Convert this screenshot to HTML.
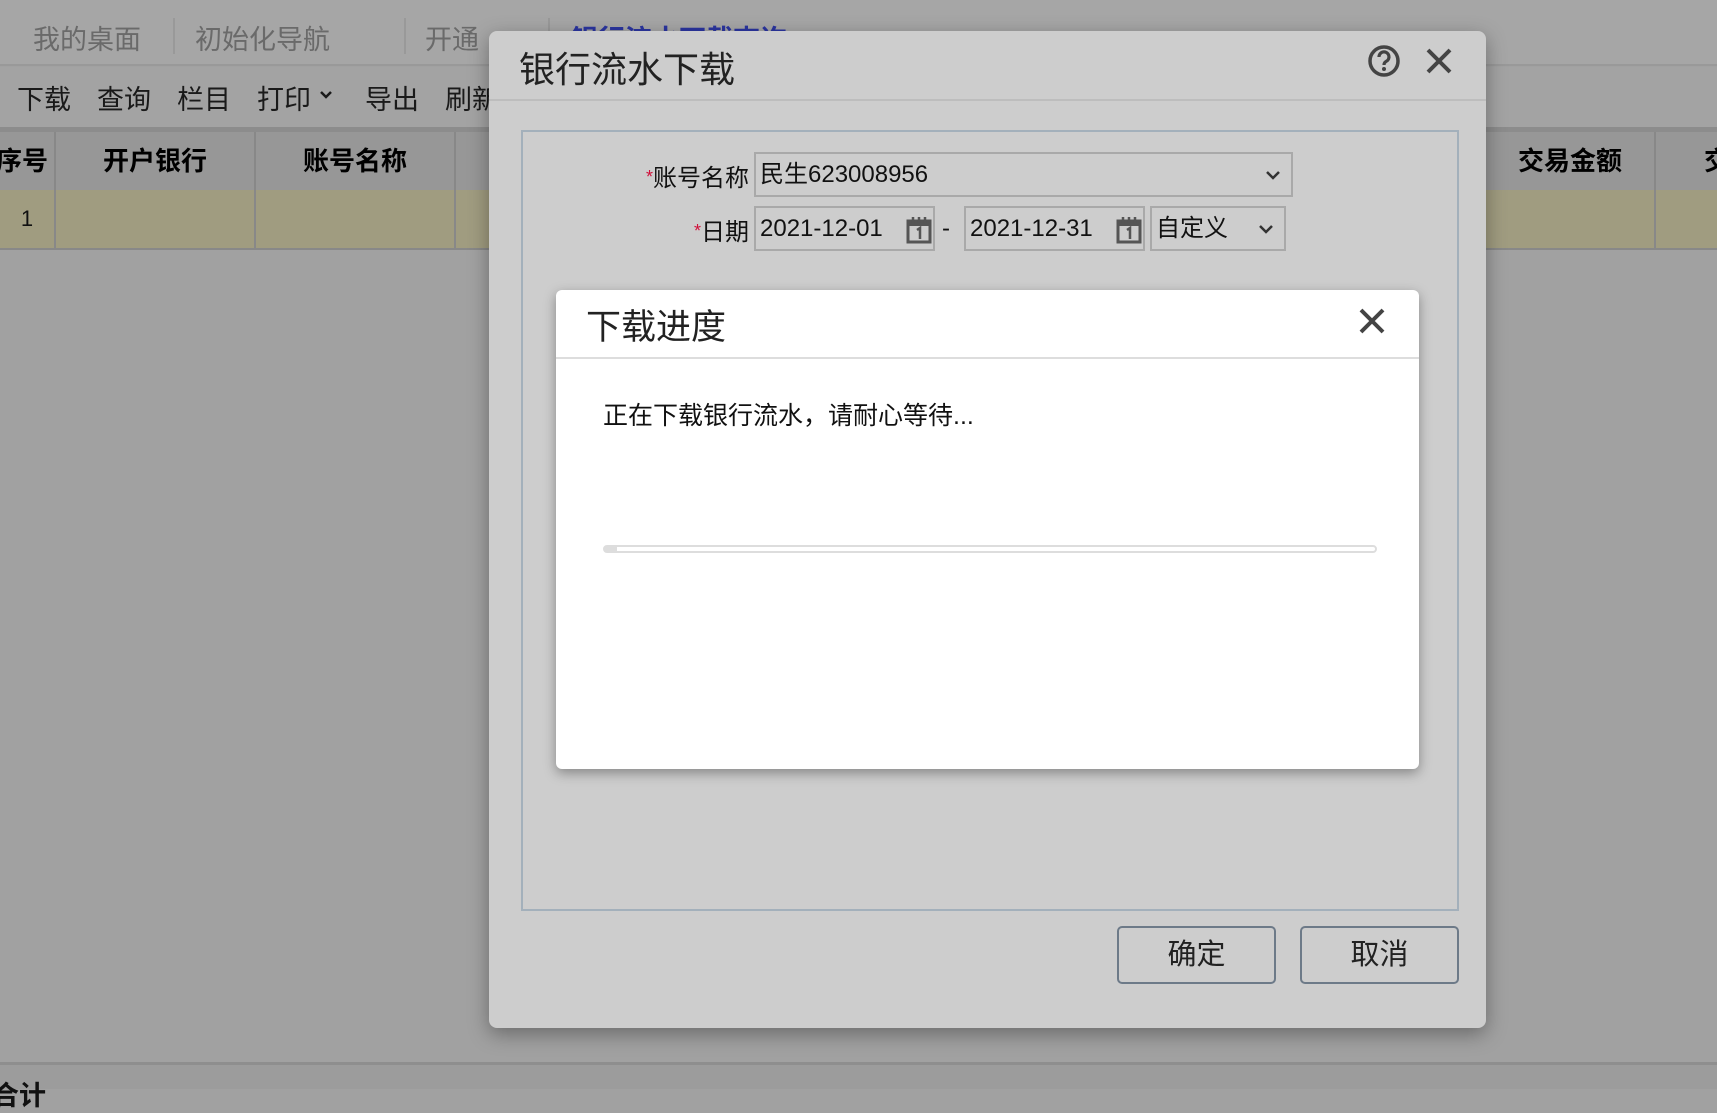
<!DOCTYPE html>
<html><head><meta charset="utf-8"><style>
*{box-sizing:border-box;margin:0;padding:0}
body{width:1717px;height:1089px;overflow:hidden;background:#a1a1a1;font-family:"Liberation Sans","Noto Sans CJK SC",sans-serif;position:relative;color:#111}
.a{position:absolute}
.tabs{left:0;top:0;width:1717px;height:66px;background:#a6a6a6;border-bottom:2px solid #999}
.tab{top:18px;font-size:27px;color:#6a6a6a}
.tb{left:0;top:67px;width:1717px;height:60px;background:#a3a3a3}
.tbi{top:78px;font-size:27px;color:#1a1a1a}
.band{left:0;top:127px;width:1717px;height:5px;background:#8c8c8c}
.hd{top:132px;height:58px;background:#979797;border-right:2px solid #888;font-size:26px;font-weight:bold;text-align:center;line-height:58px;color:#000}
.rw{top:190px;height:60px;background:#a09c80;border-right:2px solid #888;border-bottom:2px solid #888;font-size:22px;line-height:58px;text-align:center}
.dlg{left:489px;top:31px;width:997px;height:997px;background:#cdcdcd;border-radius:8px;box-shadow:0 6px 20px rgba(0,0,0,.35)}
.fs{left:32px;top:99px;width:938px;height:781px;border:2px solid #a3b0bb}
.inp{border:2px solid #a9a9a9;background:#cdcdcd;font-size:24px;line-height:41px;padding-left:4px;color:#111}
.lbl{font-size:24px;text-align:right;color:#111}
.star{color:#d0103a;font-size:18px;position:relative;top:-3px}
.btn{width:159px;height:58px;border:2px solid #6d7a88;border-radius:5px;font-size:29px;text-align:center;line-height:54px;color:#222}
.pg{left:67px;top:259px;width:863px;height:479px;background:#fff;border-radius:6px;box-shadow:0 4px 12px rgba(0,0,0,.35)}
.chev{position:absolute;top:15px}
</style></head><body>
<div class="a tabs"></div>
<div class="a tab" style="left:33px">我的桌面</div>
<div class="a" style="left:173px;top:18px;width:2px;height:36px;background:#999"></div>
<div class="a tab" style="left:195px">初始化导航</div>
<div class="a" style="left:404px;top:18px;width:2px;height:36px;background:#999"></div>
<div class="a tab" style="left:425px">开通</div>
<div class="a" style="left:548px;top:18px;width:2px;height:36px;background:#999"></div>
<div class="a tab" style="left:571px;color:#2b35a0;font-weight:bold">银行流水下载查询</div>
<div class="a tb"></div>
<div class="a tbi" style="left:17px">下载</div>
<div class="a tbi" style="left:97px">查询</div>
<div class="a tbi" style="left:177px">栏目</div>
<div class="a tbi" style="left:257px">打印</div>
<svg class="a" style="left:319px;top:90px" width="14" height="10" viewBox="0 0 14 10"><path d="M2 2l5 5 5-5" fill="none" stroke="#1a1a1a" stroke-width="2.5"/></svg>
<div class="a tbi" style="left:365px">导出</div>
<div class="a tbi" style="left:445px">刷新</div>
<div class="a band"></div>
<div class="a hd" style="left:-10px;width:66px">序号</div>
<div class="a hd" style="left:56px;width:200px">开户银行</div>
<div class="a hd" style="left:256px;width:200px">账号名称</div>
<div class="a hd" style="left:456px;width:200px"></div>
<div class="a hd" style="left:1486px;width:170px">交易金额</div>
<div class="a hd" style="left:1656px;width:100px;text-align:left;padding-left:48px">交</div>
<div class="a rw" style="left:-10px;width:66px;padding-left:10px">1</div>
<div class="a rw" style="left:56px;width:200px"></div>
<div class="a rw" style="left:256px;width:200px"></div>
<div class="a rw" style="left:456px;width:200px"></div>
<div class="a rw" style="left:1486px;width:170px"></div>
<div class="a rw" style="left:1656px;width:100px"></div>
<div class="a" style="left:0;top:1062px;width:1717px;height:3px;background:#8e8e8e"></div>
<div class="a" style="left:0;top:1065px;width:1717px;height:24px;background:#9c9c9c"></div>
<div class="a" style="left:-8px;top:1074px;font-size:27px;font-weight:bold">合计</div>

<div class="a dlg">
 <div class="a" style="left:30px;top:10px;font-size:36px;color:#222">银行流水下载</div>
 <svg class="a" style="left:878px;top:13px" width="34" height="34" viewBox="0 0 34 34"><circle cx="17" cy="17" r="14" fill="none" stroke="#444" stroke-width="3.5"/><path d="M12 13a5 5 0 1 1 7 4.5c-1.5.8-2 1.7-2 3.5" fill="none" stroke="#444" stroke-width="3.2"/><circle cx="17" cy="25" r="2" fill="#444"/></svg>
 <svg class="a" style="left:936px;top:16px" width="28" height="28" viewBox="0 0 28 28"><path d="M3 3L25 25M25 3L3 25" stroke="#444" stroke-width="4"/></svg>
 <div class="a" style="left:0;top:68px;width:997px;height:2px;background:#bdbdbd"></div>
 <div class="a fs"></div>
 <div class="a lbl" style="left:100px;top:127px;width:160px"><span class="star">*</span>账号名称</div>
 <div class="a inp" style="left:265px;top:121px;width:539px;height:45px">民生623008956<svg class="chev" style="right:10px" width="16" height="12" viewBox="0 0 16 12"><path d="M2 3l6 6 6-6" fill="none" stroke="#333" stroke-width="2.5"/></svg></div>
 <div class="a lbl" style="left:100px;top:181px;width:160px"><span class="star">*</span>日期</div>
 <div class="a inp" style="left:265px;top:175px;width:181px;height:45px">2021-12-01</div>
 <div class="a inp" style="left:475px;top:175px;width:181px;height:45px">2021-12-31</div>
 <svg class="a" style="left:417px;top:185px" width="26" height="28" viewBox="0 0 26 28"><rect x="2" y="5" width="22" height="21" fill="none" stroke="#555" stroke-width="3"/><rect x="2" y="5" width="22" height="5" fill="#555"/><path d="M7 1v6M13 1v6M19 1v6" stroke="#555" stroke-width="2.5"/><path d="M11 14l3-2v11" stroke="#555" stroke-width="2.5" fill="none"/></svg>
 <svg class="a" style="left:627px;top:185px" width="26" height="28" viewBox="0 0 26 28"><rect x="2" y="5" width="22" height="21" fill="none" stroke="#555" stroke-width="3"/><rect x="2" y="5" width="22" height="5" fill="#555"/><path d="M7 1v6M13 1v6M19 1v6" stroke="#555" stroke-width="2.5"/><path d="M11 14l3-2v11" stroke="#555" stroke-width="2.5" fill="none"/></svg>
 <div class="a" style="left:453px;top:184px;font-size:24px">-</div>
 <div class="a inp" style="left:661px;top:175px;width:136px;height:45px">自定义<svg class="chev" style="right:10px" width="16" height="12" viewBox="0 0 16 12"><path d="M2 3l6 6 6-6" fill="none" stroke="#333" stroke-width="2.5"/></svg></div>
 <div class="a pg">
  <div class="a" style="left:30px;top:9px;font-size:35px;color:#222">下载进度</div>
  <svg class="a" style="left:802px;top:17px" width="28" height="28" viewBox="0 0 28 28"><path d="M3 3L25 25M25 3L3 25" stroke="#444" stroke-width="4"/></svg>
  <div class="a" style="left:0;top:67px;width:863px;height:2px;background:#ddd"></div>
  <div class="a" style="left:47px;top:106px;font-size:25px;color:#111">正在下载银行流水，请耐心等待...</div>
  <div class="a" style="left:47px;top:255px;width:774px;height:8px;border:2px solid #ddd;border-radius:4px"><div style="width:12px;height:4px;background:#ddd"></div></div>
 </div>
 <div class="a btn" style="left:628px;top:895px">确定</div>
 <div class="a btn" style="left:811px;top:895px">取消</div>
</div>
</body></html>
